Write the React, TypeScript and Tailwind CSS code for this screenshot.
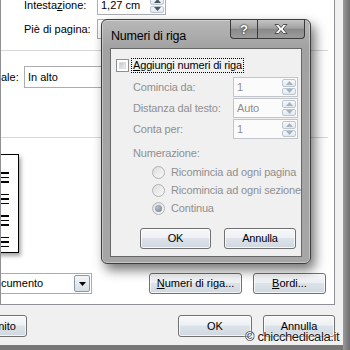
import React from "react";

const btnFace =
  "flex items-center justify-center rounded-[3px] border border-[#707070] bg-[linear-gradient(#f6f7f9_0%,#eef1f4_45%,#dde3ea_50%,#cfd7e0_100%)] shadow-[inset_0_0_0_1px_rgba(255,255,255,0.75)] text-black";

function Arrow({ up, color = "#9aa3ad" }: { up?: boolean; color?: string }) {
  return (
    <svg width="7" height="4" viewBox="0 0 7 4">
      <path d={up ? "M0 4L3.5 0L7 4Z" : "M0 0L3.5 4L7 0Z"} fill={color} />
    </svg>
  );
}

function Spin({ dark }: { dark?: boolean }) {
  const c = dark ? "#4d5560" : "#a9b1bb";
  return (
    <div className="flex flex-col w-[16px] h-full p-px gap-px">
      <div className="flex-1 flex items-center justify-center rounded-[2px] border border-[#bcc6d2] bg-[linear-gradient(#f7f9fb,#e1e8ef)]">
        <Arrow up color={c} />
      </div>
      <div className="flex-1 flex items-center justify-center rounded-[2px] border border-[#bcc6d2] bg-[linear-gradient(#f7f9fb,#e1e8ef)]">
        <Arrow color={c} />
      </div>
    </div>
  );
}

function Field({ value, disabled, className }: { value: string; disabled?: boolean; className: string }) {
  return (
    <div
      className={`flex items-stretch border ${
        disabled ? "border-[#c2c5ca] bg-[#fbfbfb] text-[#8f8f8f]" : "border-[#abadb3] bg-white text-black"
      } ${className}`}
    >
      <span className="flex-1 flex items-center pl-[3px] whitespace-nowrap">{value}</span>
      <Spin dark={!disabled} />
    </div>
  );
}

function Radio({ on }: { on?: boolean }) {
  return (
    <div className="w-[13px] h-[13px] shrink-0 rounded-full border border-[#b3b3b3] bg-[linear-gradient(135deg,#dcdcdc,#fafafa)] flex items-center justify-center">
      {on && <div className="w-[7px] h-[7px] rounded-full bg-[radial-gradient(circle_at_35%_35%,#b4c0ce,#6f7f92)]" />}
    </div>
  );
}

function Lines() {
  return (
    <div className="flex flex-col gap-[3px]">
      <div className="h-[1.5px] w-[20px] bg-black" />
      <div className="h-[1.5px] w-[20px] bg-black" />
      <div className="h-[1.5px] w-[20px] bg-black" />
    </div>
  );
}

function LineNumbersDialog() {
  return (
    <div className="absolute left-[101px] top-[19px] w-[210px] h-[245px] flex flex-col rounded-[6px] border border-[#3e3e3e] bg-[linear-gradient(#b8b8b8,#a2a2a2_28px,#a6a6a6)] shadow-[4px_6px_12px_rgba(0,0,0,0.55),inset_0_0_0_1px_rgba(255,255,255,0.35)]">
      <div className="h-[28px] flex items-start">
        <span className="mt-[9px] ml-[9px] text-[12.5px] leading-[14px] tracking-[-0.2px] text-black">Numeri di riga</span>
        <div className="ml-auto mr-[5px] flex h-[19px] rounded-b-[4px] border border-t-0 border-[#3a3a3a] overflow-hidden bg-[linear-gradient(#c4c4c4,#a2a2a2_45%,#8a8a8a_52%,#9c9c9c)]">
          <div className="w-[27px] flex items-center justify-center border-r border-[#3a3a3a] text-white font-bold text-[13px] [text-shadow:0_0_2px_#222,0_0_1px_#222]">
            ?
          </div>
          <div className="w-[46px] flex items-center justify-center">
            <svg width="14" height="10" viewBox="0 0 14 10">
              <path
                d="M1 0.5h3.5l2.5 3 2.5-3h3.5l-4 4.5 4 4.5h-3.5l-2.5-3-2.5 3h-3.5l4-4.5z"
                fill="#fff"
                stroke="#333"
                strokeWidth="0.8"
              />
            </svg>
          </div>
        </div>
      </div>

      <div className="mx-[8px] h-[209px] border border-[#676767] bg-[#f0f0f0] flex flex-col tracking-[-0.15px]">
        <div className="mt-[9px] h-[15px] flex items-center">
          <div className="ml-[5px] w-[13px] h-[13px] border border-[#8e8f8f] bg-white p-[2px]">
            <div className="w-full h-full bg-[linear-gradient(135deg,#c3c7cc,#eef0f2)] border border-[#d8dadd]" />
          </div>
          <span className="ml-[2px] h-[15px] px-px border border-dotted border-black flex items-center whitespace-nowrap">
            <span className="underline underline-offset-1">A</span>ggiungi numeri di riga
          </span>
        </div>

        <div className="mt-[4px] flex flex-col gap-px pl-[22px] text-[#8f8f8f]">
          <div className="h-[20px] flex items-center">
            <span className="w-[100px]">Comincia da:</span>
            <Field value="1" disabled className="w-[65px] h-[20px]" />
          </div>
          <div className="h-[20px] flex items-center">
            <span className="w-[100px] whitespace-nowrap">Distanza dal testo:</span>
            <Field value="Auto" disabled className="w-[65px] h-[20px]" />
          </div>
          <div className="h-[20px] flex items-center">
            <span className="w-[100px]">Conta per:</span>
            <Field value="1" disabled className="w-[65px] h-[20px]" />
          </div>
          <div className="mt-[6px] h-[14px] flex items-center">Numerazione:</div>
          <div className="mt-[2px] pl-[19px] flex flex-col">
            <div className="h-[18px] flex items-center gap-[6px] whitespace-nowrap">
              <Radio />
              Ricomincia ad ogni pagina
            </div>
            <div className="h-[18px] flex items-center gap-[6px] whitespace-nowrap">
              <Radio />
              Ricomincia ad ogni sezione
            </div>
            <div className="h-[18px] flex items-center gap-[6px] whitespace-nowrap">
              <Radio on />
              Continua
            </div>
          </div>
        </div>

        <div className="mt-[11px] flex">
          <div className={`${btnFace} ml-[29px] w-[71px] h-[21px]`}>OK</div>
          <div className={`${btnFace} ml-[13px] w-[72px] h-[21px]`}>Annulla</div>
        </div>
      </div>
    </div>
  );
}

export default function App() {
  return (
    <div className="relative w-[350px] h-[350px] overflow-hidden flex bg-[#777] font-['Liberation_Sans',Arial,sans-serif] text-[11px] leading-[13px] text-black">
      <div className="w-[343px] h-[345px] bg-[#f0f0f0] flex flex-col shrink-0">
        <div className="w-[335px] h-[305px] shrink-0 bg-white border-l border-r border-b border-[#8e9096] overflow-hidden flex flex-col">
          <div className="-mt-[5px] pl-[23px] flex flex-col gap-[4px]">
            <div className="h-[20px] flex items-center">
              <span className="w-[73px]">
                Intesta<span className="underline underline-offset-1">z</span>ione:
              </span>
              <Field value="1,27 cm" className="w-[69px] h-[20px]" />
            </div>
            <div className="h-[20px] flex items-center">
              <span className="w-[73px]">
                Piè di pa<span className="underline underline-offset-1">g</span>ina:
              </span>
              <Field value="1,27 cm" className="w-[69px] h-[20px]" />
            </div>
          </div>

          <div className="mt-[11px] h-px w-[327px] bg-[#d7d7d7]" />

          <div className="mt-[15px] h-[22px] flex items-center">
            <span className="w-[23px]">ale:</span>
            <div className="w-[150px] h-[22px] border border-[#abadb3] bg-white flex items-center pl-[3px]">In alto</div>
          </div>

          <div className="mt-[49px] h-px w-[327px] bg-[#d7d7d7]" />

          <div className="mt-[16px] ml-[-62px] w-[80px] h-[99px] border border-black bg-white shadow-[2px_3px_4px_rgba(0,0,0,0.35)] flex flex-col items-end pr-[9px] pt-[17px] gap-[11px]">
            <Lines />
            <Lines />
            <Lines />
            <Lines />
          </div>

          <div className="mt-[20px] h-[21px] flex items-center">
            <div className="ml-[-2px] w-[93px] h-[21px] border border-[#abadb3] bg-white flex items-stretch">
              <span className="flex-1 flex items-center pl-[1px]">cumento</span>
              <div className="m-px w-[16px] rounded-[2px] border border-[#8a98a8] bg-[linear-gradient(#f3f6f9,#d6dee7)] flex items-center justify-center">
                <Arrow color="#000" />
              </div>
            </div>
            <div className={`${btnFace} ml-[57px] w-[93px] h-[21px]`}>
              <span className="underline underline-offset-1">N</span>umeri di riga...
            </div>
            <div className={`${btnFace} ml-[11px] w-[73px] h-[21px]`}>
              <span className="underline underline-offset-1">B</span>ordi...
            </div>
          </div>
        </div>

        <div className="pt-[10px] flex">
          <div className={`${btnFace} ml-[-50px] w-[77px] h-[22px] !justify-end pr-[10px]`}>nito</div>
          <div className={`${btnFace} ml-[151px] w-[74px] h-[22px]`}>OK</div>
          <div className={`${btnFace} ml-[11px] w-[72px] h-[22px]`}>Annulla</div>
        </div>
      </div>
      <div className="w-[7px] h-full bg-[linear-gradient(90deg,#9a9a9a,#6e6e6e)]" />

      <LineNumbersDialog />

      <div className="absolute left-[245px] top-[329px] text-[13px] leading-[16px] tracking-[-0.4px] text-[#1a1a1a] [text-shadow:0_0_2px_#fff,0_0_2px_#fff]">
        © chicchedicala.it
      </div>
    </div>
  );
}
